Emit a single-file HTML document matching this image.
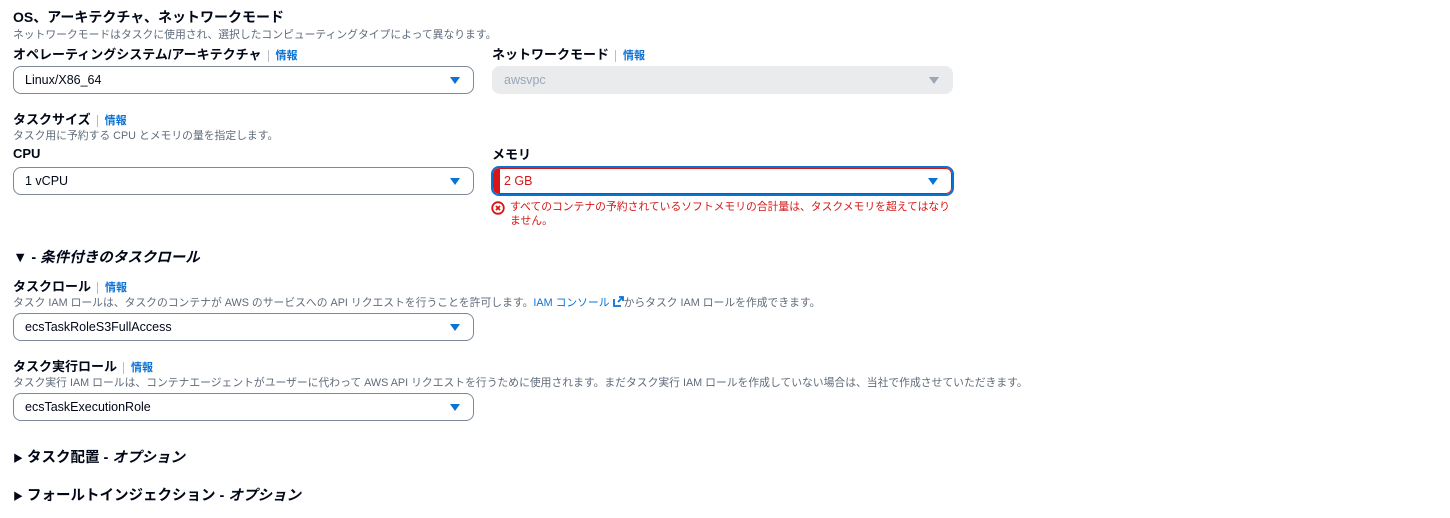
<!DOCTYPE html>
<html><head><meta charset="utf-8"><style>
*{margin:0;padding:0;box-sizing:border-box}
body{width:1450px;height:518px;background:#fff;font-family:"Liberation Sans","Noto Sans CJK JP",sans-serif;color:#000716;position:relative;overflow:hidden}
.a{position:absolute;white-space:nowrap}
.t{font-weight:bold;font-size:13px}
.h{font-weight:bold;font-size:14px}
.d{font-size:10.8px;color:#5f6b7a}
.info{color:#0972d3;font-weight:bold;font-size:11px;border-left:1px solid #b6bec9;padding-left:7px;margin-left:6px}
.sel{position:absolute;height:28px;border:1px solid #7d8998;border-radius:8px;font-size:12.5px;padding:6px 11px;background:#fff}
.sel .ar{position:absolute;right:13px;top:10px;width:0;height:0;border-left:5px solid transparent;border-right:5px solid transparent;border-top:7px solid #0972d3}
.sec{font-weight:bold;font-size:14.5px}
</style></head><body>
<div class="a h" style="left:13px;top:7px">OS、アーキテクチャ、ネットワークモード</div>
<div class="a d" style="left:13px;top:26px">ネットワークモードはタスクに使用され、選択したコンピューティングタイプによって異なります。</div>
<div class="a t" style="left:13px;top:44px">オペレーティングシステム/アーキテクチャ<span class="info">情報</span></div>
<div class="a t" style="left:492px;top:44px">ネットワークモード<span class="info">情報</span></div>
<div class="sel" style="left:13px;top:66px;width:461px">Linux/X86_64<span class="ar"></span></div>
<div class="sel" style="left:492px;top:66px;width:461px;background:#e9ebed;border-color:#e9ebed;color:#9ba7b6">awsvpc<span class="ar" style="border-top-color:#9ba7b6"></span></div>

<div class="a t" style="left:13px;top:109px">タスクサイズ<span class="info">情報</span></div>
<div class="a d" style="left:13px;top:127px">タスク用に予約する CPU とメモリの量を指定します。</div>
<div class="a t" style="left:13px;top:146px">CPU</div>
<div class="a t" style="left:492px;top:144px">メモリ</div>
<div class="sel" style="left:13px;top:167px;width:461px">1 vCPU<span class="ar"></span></div>
<div class="sel" style="left:491px;top:166px;width:463px;height:30px;border:2px solid #0972d3;padding:0;overflow:hidden">
 <div style="position:absolute;inset:0;border:1px solid #d91515;border-left:7px solid #d91515;border-radius:6px;color:#d91515;padding:5px 4px;font-size:12.5px">2 GB</div><span class="ar" style="right:14px"></span></div>
<svg class="a" style="left:491px;top:201px" width="14" height="14" viewBox="0 0 14 14"><circle cx="7" cy="7" r="5.8" fill="none" stroke="#d91515" stroke-width="1.8"/><path d="M5 5L9 9M9 5L5 9" stroke="#d91515" stroke-width="1.8"/></svg>
<div class="a" style="left:510px;top:200px;font-size:10.8px;color:#d91515;line-height:14px;white-space:normal;width:445px">すべてのコンテナの予約されているソフトメモリの合計量は、タスクメモリを超えてはなりません。</div>

<div class="a sec" style="left:13px;top:246px">▼ - <i>条件付きのタスクロール</i></div>
<div class="a t" style="left:13px;top:276px">タスクロール<span class="info">情報</span></div>
<div class="a d" style="left:13px;top:294px">タスク IAM ロールは、タスクのコンテナが AWS のサービスへの API リクエストを行うことを許可します。<span style="color:#0972d3">IAM コンソール <svg width="11" height="11" viewBox="0 0 11 11" style="vertical-align:-1px"><path d="M1 3v7h7M5 6l5-5M6 1h4v4" fill="none" stroke="#0972d3" stroke-width="1.8"/></svg></span>からタスク IAM ロールを作成できます。</div>
<div class="sel" style="left:13px;top:313px;width:461px">ecsTaskRoleS3FullAccess<span class="ar"></span></div>
<div class="a t" style="left:13px;top:356px">タスク実行ロール<span class="info">情報</span></div>
<div class="a d" style="left:13px;top:374px">タスク実行 IAM ロールは、コンテナエージェントがユーザーに代わって AWS API リクエストを行うために使用されます。まだタスク実行 IAM ロールを作成していない場合は、当社で作成させていただきます。</div>
<div class="sel" style="left:13px;top:393px;width:461px">ecsTaskExecutionRole<span class="ar"></span></div>

<div class="a sec" style="left:13px;top:446px"><span style="font-size:10px">▶</span> タスク配置 - <i>オプション</i></div>
<div class="a sec" style="left:13px;top:484px"><span style="font-size:10px">▶</span> フォールトインジェクション - <i>オプション</i></div>
</body></html>
